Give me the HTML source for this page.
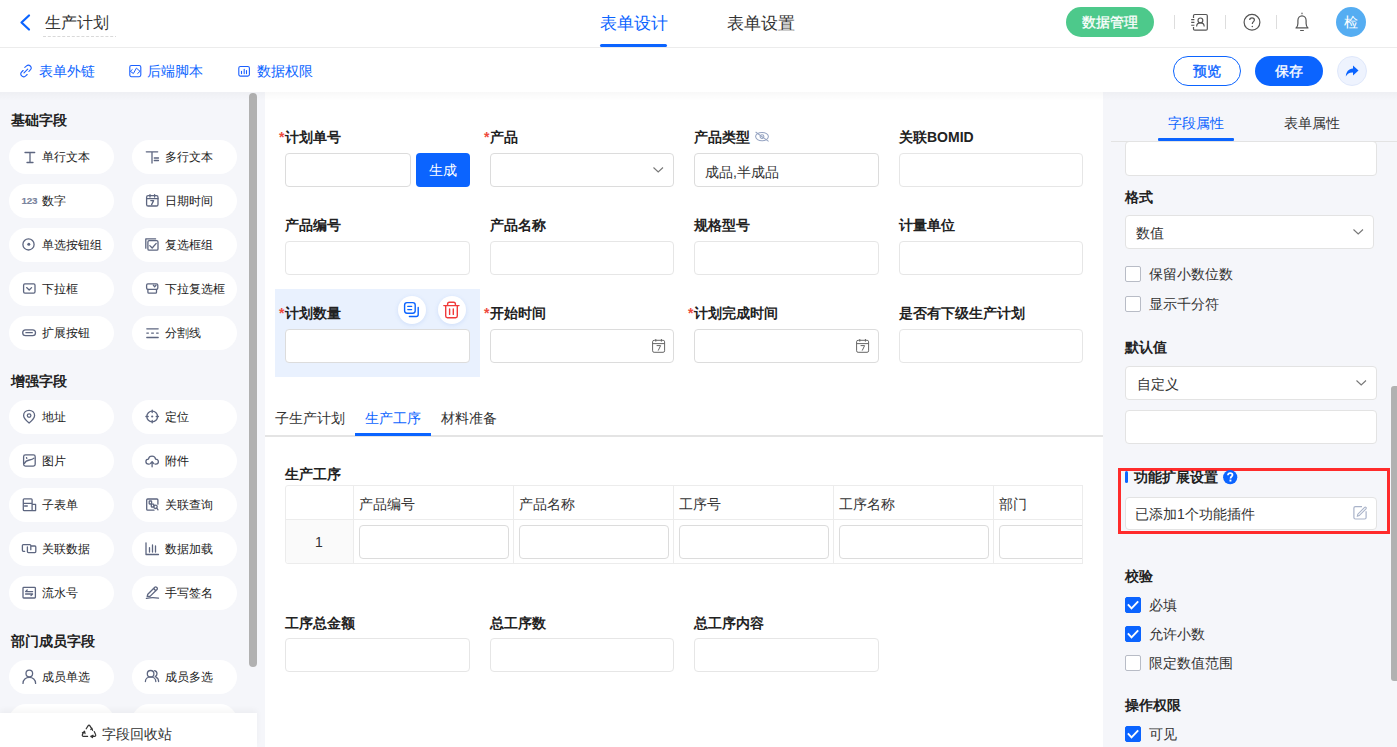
<!DOCTYPE html>
<html><head><meta charset="utf-8">
<style>
*{box-sizing:border-box;margin:0;padding:0}
html,body{width:1397px;height:747px;overflow:hidden}
body{position:relative;font-family:"Liberation Sans",sans-serif;background:#fff;color:#333}
.a{position:absolute;white-space:nowrap}
.t12{font-size:12px;line-height:20px}
.t14{font-size:14px;line-height:20px}
.b{font-weight:bold;color:#222;margin-top:-1px}
.blue{color:#0b64ff}
.inp{position:absolute;background:#fff;border:1px solid #dcdcdc;border-radius:4px}
.req{color:#ee4a3c;font-weight:bold;position:absolute;left:-6px;top:0}
.fb{position:absolute;width:105px;height:34px;border-radius:17px;background:#fff}
.fb svg{position:absolute;left:14px;top:10px}
.fb span{position:absolute;left:33px;top:7px;font-size:12px;line-height:20px;color:#222;white-space:nowrap}
.cb{position:absolute;width:16px;height:16px;border:1px solid #b8bcc6;border-radius:2px;background:#fff}
.cb.on{background:#0b64ff;border-color:#0b64ff}
</style></head><body>

<!-- HEADER -->
<svg class="a" style="left:0;top:0" width="40" height="47"><path d="M29 15.5 L21.5 22.5 L29 29.5" fill="none" stroke="#0b64ff" stroke-width="2.2" stroke-linecap="round" stroke-linejoin="round"/></svg>
<div class="a" style="left:45px;top:13px;font-size:16px;line-height:20px;color:#333">生产计划</div>
<svg class="a" style="left:43px;top:35px" width="73" height="3"><line x1="0" y1="1.5" x2="73" y2="1.5" stroke="#d9d9d9" stroke-width="1" stroke-dasharray="3 1.8"/></svg>
<div class="a blue" style="left:600px;top:13px;font-size:16.5px;line-height:20px">表单设计</div>
<div class="a" style="left:727px;top:13px;font-size:16.5px;line-height:20px;color:#333">表单设置</div>
<div class="a" style="left:600px;top:44px;width:67px;height:3px;background:#0b64ff;border-radius:2px"></div>
<div class="a" style="left:0;top:47px;width:1397px;height:1px;background:#ececec"></div>

<div class="a" style="left:1066px;top:7px;width:88px;height:30px;border-radius:15px;background:#4dc98b;color:#fff;font-size:14px;line-height:30px;text-align:center;-webkit-text-stroke:0.3px #fff">数据管理</div>
<div class="a" style="left:1174px;top:15px;width:1px;height:14px;background:#ddd"></div>
<div class="a" style="left:1225px;top:15px;width:1px;height:14px;background:#ddd"></div>
<div class="a" style="left:1276px;top:15px;width:1px;height:14px;background:#ddd"></div>
<!-- contact icon -->
<svg class="a" style="left:1185px;top:8px" width="30" height="28" viewBox="1185 8 30 28"><path d="M1193.5 18 V15.8 C1193.5 15 1194.1 14.5 1194.8 14.5 H1206 C1206.7 14.5 1207.3 15 1207.3 15.8 V29 C1207.3 29.7 1206.7 30.2 1206 30.2 H1194.8 C1194.1 30.2 1193.5 29.7 1193.5 29 V27" fill="none" stroke="#555" stroke-width="1.2"/><path d="M1191.2 19.6 H1194.4 M1191.2 22.4 H1194.4 M1191.2 25.2 H1194.4" stroke="#555" stroke-width="1.1"/><circle cx="1200.4" cy="20.4" r="2.4" fill="none" stroke="#555" stroke-width="1.2"/><path d="M1196.6 26.6 C1196.6 24.3 1198.3 22.8 1200.4 22.8 C1202.5 22.8 1204.2 24.3 1204.2 26.6" fill="none" stroke="#555" stroke-width="1.2"/></svg>
<!-- help icon -->
<svg class="a" style="left:1238px;top:8px" width="80" height="28" viewBox="1238 8 80 28"><circle cx="1252" cy="22.3" r="7.9" fill="none" stroke="#555" stroke-width="1.2"/><path d="M1249.7 20.1 C1249.7 18.7 1250.7 17.9 1252 17.9 C1253.4 17.9 1254.4 18.8 1254.4 20 C1254.4 21.6 1252.3 21.8 1252.3 24" fill="none" stroke="#555" stroke-width="1.2"/><circle cx="1252.3" cy="26.4" r="0.75" fill="#555"/>
<path d="M1296 27.9 C1297.4 27 1297.9 25.8 1297.9 23.6 V20.6 C1297.9 17.8 1299.7 15.8 1302 15.8 C1304.3 15.8 1306.1 17.8 1306.1 20.6 V23.6 C1306.1 25.8 1306.6 27 1308 27.9 Z" fill="none" stroke="#555" stroke-width="1.2" stroke-linejoin="round"/><path d="M1302 13.2 V13.7 M1300.6 30.5 H1303.4" stroke="#555" stroke-width="1.2" stroke-linecap="round"/></svg>
<div class="a" style="left:1336px;top:7px;width:30px;height:30px;border-radius:15px;background:#55adf2;color:#fff;font-size:14px;line-height:30px;text-align:center">检</div>

<!-- TOOLBAR -->
<svg class="a" style="left:19px;top:64px" width="14" height="14" viewBox="0 0 14 14"><path d="M5.8 3.3 L7.6 1.8 C8.7 0.9 10.3 1 11.3 2 C12.3 3 12.4 4.6 11.5 5.7 L9.9 7.5 M8.2 10.5 L6.4 12.1 C5.3 13 3.7 12.9 2.7 11.9 C1.7 10.9 1.6 9.3 2.5 8.2 L4.1 6.5 M5 8.9 L8.7 5.2" fill="none" stroke="#1a5fff" stroke-width="1.1" stroke-linecap="round"/></svg>
<div class="a t14 blue" style="left:39px;top:61px">表单外链</div>
<svg class="a" style="left:128px;top:64px" width="14" height="14" viewBox="0 0 14 14"><rect x="1.8" y="1.5" width="11" height="11.2" rx="1.6" fill="none" stroke="#1a5fff" stroke-width="1.1"/><path d="M4.5 5.4 L2.3 7.3 L5.4 9.5 L8.4 4.1 L12 7.3 L9.4 9.7" fill="none" stroke="#1a5fff" stroke-width="1" stroke-linejoin="round"/></svg>
<div class="a t14 blue" style="left:147px;top:61px">后端脚本</div>
<svg class="a" style="left:237px;top:64px" width="14" height="14" viewBox="0 0 14 14"><rect x="1.8" y="2.5" width="10.6" height="9.6" rx="1.6" fill="none" stroke="#1a5fff" stroke-width="1.1"/><path d="M4.5 7.2V9.6 M7.2 5.2V9.6 M9.5 6.5V9.6" stroke="#1a5fff" stroke-width="1.1" stroke-linecap="round"/></svg>
<div class="a t14 blue" style="left:257px;top:61px">数据权限</div>

<div class="a" style="left:1173px;top:56px;width:68px;height:30px;border:1px solid #0b64ff;border-radius:15px;color:#0b64ff;font-size:14px;line-height:28px;text-align:center;-webkit-text-stroke:0.35px #0b64ff">预览</div>
<div class="a" style="left:1255px;top:56px;width:68px;height:30px;background:#0b64ff;border-radius:15px;color:#fff;font-size:14px;line-height:30px;text-align:center;-webkit-text-stroke:0.35px #fff">保存</div>
<div class="a" style="left:1337px;top:56px;width:30px;height:30px;background:#eef3fe;border:1px solid #dfe8fb;border-radius:15px"></div>
<svg class="a" style="left:1342px;top:61px" width="20" height="20" viewBox="0 0 20 20"><path d="M11 4.5 L16.5 9.5 L11 14.5 V11.5 C7.5 11.3 5.5 12.5 3.8 15.5 C4.2 10.8 6.5 7.8 11 7.5 Z" fill="#0b64ff"/></svg>

<div class="a" style="left:0;top:92px;width:1397px;height:10px;background:linear-gradient(rgba(0,0,0,0.035),rgba(0,0,0,0))"></div>

<!-- LEFT PANEL -->
<div class="a" style="left:0;top:92px;width:265px;height:655px;background:#f5f6fa;overflow:hidden">
  <div class="a t14 b" style="left:11px;top:19px">基础字段</div>
  <div class="a t14 b" style="left:11px;top:280px">增强字段</div>
  <div class="a t14 b" style="left:11px;top:540px">部门成员字段</div>
  <div class="a" style="left:249px;top:1px;width:8px;height:574px;border-radius:4px;background:#b1b1b1"></div>
</div>
<div id="lp" class="a" style="left:0;top:0;width:265px;height:747px">
<div class="fb" style="left:9px;top:140px"><svg style="left:0;top:0" width="40" height="34"><path d="M16 12.5H25.7M21 12.5V22.5M18 22.5H24" fill="none" stroke="#5d6680" stroke-width="1.3" stroke-linecap="round" stroke-linejoin="round"/></svg><span>单行文本</span></div>
<div class="fb" style="left:132px;top:140px"><svg style="left:0;top:0" width="40" height="34"><path d="M14.3 11.8H25.7M20 11.8V23M22.3 18H26.5M22.3 20.5H26.5" fill="none" stroke="#5d6680" stroke-width="1.3" stroke-linecap="round" stroke-linejoin="round"/></svg><span>多行文本</span></div>
<div class="fb" style="left:9px;top:184px"><svg style="left:0;top:0" width="40" height="34"><text x="12.5" y="19.9" font-family="Liberation Sans" font-weight="bold" font-size="9.8" fill="#7a849d" stroke="#7a849d" stroke-width="0.15" letter-spacing="-0.25">123</text></svg><span>数字</span></div>
<div class="fb" style="left:132px;top:184px"><svg style="left:0;top:0" width="40" height="34"><rect x="14.6" y="11.6" width="11.4" height="10.4" rx="1.6" fill="none" stroke="#5d6680" stroke-width="1.3" stroke-linecap="round" stroke-linejoin="round"/><path d="M14.6 14.6H26M18 10.6V13M22.6 10.6V13M18.8 16.6H21.6L19.6 20.6" fill="none" stroke="#5d6680" stroke-width="1.3" stroke-linecap="round" stroke-linejoin="round" stroke-width="1.1"/></svg><span>日期时间</span></div>
<div class="fb" style="left:9px;top:228px"><svg style="left:0;top:0" width="40" height="34"><circle cx="19.5" cy="16.4" r="5.6" fill="none" stroke="#5d6680" stroke-width="1.3" stroke-linecap="round" stroke-linejoin="round"/><circle cx="19.8" cy="16.3" r="1.5" fill="#5d6680"/></svg><span>单选按钮组</span></div>
<div class="fb" style="left:132px;top:228px"><svg style="left:0;top:0" width="40" height="34"><path d="M13.8 20.2V10.9H23.6" fill="none" stroke="#5d6680" stroke-width="1.3" stroke-linecap="round" stroke-linejoin="round"/><rect x="15.9" y="12.6" width="10.1" height="9.6" rx="1.3" fill="none" stroke="#5d6680" stroke-width="1.3" stroke-linecap="round" stroke-linejoin="round"/><path d="M17.8 17.6L20.2 20L24.2 15.4" fill="none" stroke="#5d6680" stroke-width="1.3" stroke-linecap="round" stroke-linejoin="round"/></svg><span>复选框组</span></div>
<div class="fb" style="left:9px;top:272px"><svg style="left:0;top:0" width="40" height="34"><rect x="14.6" y="11.9" width="11.4" height="9.2" rx="1.3" fill="none" stroke="#5d6680" stroke-width="1.3" stroke-linecap="round" stroke-linejoin="round"/><path d="M17.6 15.6L20.2 18L22.6 15.6" fill="none" stroke="#5d6680" stroke-width="1.3" stroke-linecap="round" stroke-linejoin="round"/></svg><span>下拉框</span></div>
<div class="fb" style="left:132px;top:272px"><svg style="left:0;top:0" width="40" height="34"><rect x="14.6" y="11.9" width="11.2" height="5.4" rx="1.3" fill="none" stroke="#5d6680" stroke-width="1.3" stroke-linecap="round" stroke-linejoin="round"/><path d="M15.9 17.3V20.2C15.9 20.8 16.3 21.2 16.9 21.2H23.5C24.1 21.2 24.5 20.8 24.5 20.2V17.3M21.3 13.2L22.6 14.8L24 13.2" fill="none" stroke="#5d6680" stroke-width="1.3" stroke-linecap="round" stroke-linejoin="round"/></svg><span>下拉复选框</span></div>
<div class="fb" style="left:9px;top:316px"><svg style="left:0;top:0" width="40" height="34"><rect x="13.7" y="13.8" width="12.8" height="5.8" rx="2.9" fill="none" stroke="#5d6680" stroke-width="1.3" stroke-linecap="round" stroke-linejoin="round"/><path d="M16.9 16.7H23.3" fill="none" stroke="#5d6680" stroke-width="1.3" stroke-linecap="round" stroke-linejoin="round"/></svg><span>扩展按钮</span></div>
<div class="fb" style="left:132px;top:316px"><svg style="left:0;top:0" width="40" height="34"><path d="M14.8 12.8H26.2M14.8 21.5H26.2M14.8 17.1H16.4M19.6 17.1H21.4M24.6 17.1H26.2" fill="none" stroke="#5d6680" stroke-width="1.3" stroke-linecap="round" stroke-linejoin="round"/></svg><span>分割线</span></div>
<div class="fb" style="left:9px;top:400px"><svg style="left:0;top:0" width="40" height="34"><path d="M20.1 23C20.1 23 14.6 18.6 14.6 15.6C14.6 12.5 17.1 10.4 20.1 10.4C23.1 10.4 25.6 12.5 25.6 15.6C25.6 18.6 20.1 23 20.1 23Z" fill="none" stroke="#5d6680" stroke-width="1.3" stroke-linecap="round" stroke-linejoin="round"/><circle cx="20.1" cy="15.6" r="1.8" fill="none" stroke="#5d6680" stroke-width="1.3" stroke-linecap="round" stroke-linejoin="round"/></svg><span>地址</span></div>
<div class="fb" style="left:132px;top:400px"><svg style="left:0;top:0" width="40" height="34"><circle cx="20.2" cy="16.5" r="5.4" fill="none" stroke="#5d6680" stroke-width="1.3" stroke-linecap="round" stroke-linejoin="round"/><path d="M20.2 10.2V12.5M20.2 20.5V22.8M13.9 16.5H16.2M24.2 16.5H26.5" fill="none" stroke="#5d6680" stroke-width="1.3" stroke-linecap="round" stroke-linejoin="round"/><circle cx="20.2" cy="16.5" r="1.1" fill="#5d6680"/></svg><span>定位</span></div>
<div class="fb" style="left:9px;top:444px"><svg style="left:0;top:0" width="40" height="34"><rect x="14.6" y="10.9" width="11.6" height="11.2" rx="1.8" fill="none" stroke="#5d6680" stroke-width="1.3" stroke-linecap="round" stroke-linejoin="round"/><path d="M15.4 19.5C16.4 17 18 16.3 20.5 16C22.8 15.8 24 15.4 25 14.2M17.5 13.6L17.8 14.4" fill="none" stroke="#5d6680" stroke-width="1.3" stroke-linecap="round" stroke-linejoin="round"/></svg><span>图片</span></div>
<div class="fb" style="left:132px;top:444px"><svg style="left:0;top:0" width="40" height="34"><path d="M17.2 20.2H16.6C14.9 20.2 13.9 19 13.9 17.6C13.9 16.2 14.9 15.1 16.4 15.1C16.8 13.3 18.2 12.2 20 12.2C21.9 12.2 23.3 13.5 23.6 15.2C25.2 15.3 26.4 16.3 26.4 17.8C26.4 19.2 25.3 20.2 23.9 20.2H23.2M20.1 22.8V17.8M18.3 19.6L20.1 17.6L21.9 19.6" fill="none" stroke="#5d6680" stroke-width="1.3" stroke-linecap="round" stroke-linejoin="round"/></svg><span>附件</span></div>
<div class="fb" style="left:9px;top:488px"><svg style="left:0;top:0" width="40" height="34"><path d="M23.1 16.4V11.7C23.1 11.1 22.7 10.8 22.2 10.8H15.2C14.7 10.8 14.3 11.1 14.3 11.7V21.7C14.3 22.2 14.7 22.6 15.2 22.6H26.6V16.4H23.1V22.6M14.3 15.4H23.1M15.6 18H18.3" fill="none" stroke="#5d6680" stroke-width="1.3" stroke-linecap="round" stroke-linejoin="round"/></svg><span>子表单</span></div>
<div class="fb" style="left:132px;top:488px"><svg style="left:0;top:0" width="40" height="34"><path d="M22 22.2H15.7C15.1 22.2 14.7 21.8 14.7 21.2V12C14.7 11.4 15.1 11 15.7 11H24.9C25.5 11 25.9 11.4 25.9 12V16.2" fill="none" stroke="#5d6680" stroke-width="1.3" stroke-linecap="round" stroke-linejoin="round"/><rect x="17.2" y="13" width="2.4" height="3" rx="0.5" fill="none" stroke="#5d6680" stroke-width="1.3" stroke-linecap="round" stroke-linejoin="round" stroke-width="1.1"/><rect x="19.3" y="16.2" width="2.5" height="2.8" rx="0.5" fill="none" stroke="#5d6680" stroke-width="1.3" stroke-linecap="round" stroke-linejoin="round" stroke-width="1.1"/><circle cx="23.5" cy="18.8" r="1.7" fill="none" stroke="#5d6680" stroke-width="1.3" stroke-linecap="round" stroke-linejoin="round" stroke-width="1.1"/><path d="M24.8 20.2L26 21.8" fill="none" stroke="#5d6680" stroke-width="1.3" stroke-linecap="round" stroke-linejoin="round"/></svg><span>关联查询</span></div>
<div class="fb" style="left:9px;top:532px"><svg style="left:0;top:0" width="40" height="34"><path d="M15.7 19.3H14.4C13.8 19.3 13.4 18.9 13.4 18.3V13.6C13.4 13 13.8 12.6 14.4 12.6H20.8C21.4 12.6 21.8 13 21.8 13.6V17.7M18.4 15V19.6C18.4 20.2 18.8 20.6 19.4 20.6H25.8C26.4 20.6 26.8 20.2 26.8 19.6V15C26.8 14.4 26.4 14 25.8 14H22" fill="none" stroke="#5d6680" stroke-width="1.3" stroke-linecap="round" stroke-linejoin="round"/></svg><span>关联数据</span></div>
<div class="fb" style="left:132px;top:532px"><svg style="left:0;top:0" width="40" height="34"><path d="M14 10.8V22.5H26.5M17.5 15.6V20M20.5 13V20M23.5 14V20" fill="none" stroke="#5d6680" stroke-width="1.3" stroke-linecap="round" stroke-linejoin="round"/></svg><span>数据加载</span></div>
<div class="fb" style="left:9px;top:576px"><svg style="left:0;top:0" width="40" height="34"><rect x="14" y="11.4" width="12.4" height="10.6" rx="0.8" fill="none" stroke="#5d6680" stroke-width="1.3" stroke-linecap="round" stroke-linejoin="round"/><path d="M16.6 15.6H23.6M16.6 18H23.6M16.8 15.4L18.2 14M23.4 18.2L22 19.6" fill="none" stroke="#5d6680" stroke-width="1.3" stroke-linecap="round" stroke-linejoin="round"/></svg><span>流水号</span></div>
<div class="fb" style="left:132px;top:576px"><svg style="left:0;top:0" width="40" height="34"><path d="M15.2 20.4L15.8 18.2L22.8 11.3C23.3 10.8 24 10.8 24.5 11.3L25 11.8C25.5 12.3 25.5 13 25 13.5L18 20.4Z M21.6 12.5L23.8 14.7" fill="none" stroke="#5d6680" stroke-width="1.3" stroke-linecap="round" stroke-linejoin="round"/><path d="M14.4 22.3C18 21.6 22 21.5 26.5 22.1" fill="none" stroke="#5d6680" stroke-width="1.3" stroke-linecap="round" stroke-linejoin="round"/></svg><span>手写签名</span></div>
<div class="fb" style="left:9px;top:660px"><svg style="left:0;top:0" width="40" height="34"><circle cx="20.3" cy="13.5" r="3.3" fill="none" stroke="#5d6680" stroke-width="1.3" stroke-linecap="round" stroke-linejoin="round"/><path d="M14 23.4C14 19.8 16.8 17.4 20.3 17.4C23.8 17.4 26.6 19.8 26.6 23.4" fill="none" stroke="#5d6680" stroke-width="1.3" stroke-linecap="round" stroke-linejoin="round"/></svg><span>成员单选</span></div>
<div class="fb" style="left:132px;top:660px"><svg style="left:0;top:0" width="40" height="34"><circle cx="18.6" cy="13.8" r="3.3" fill="none" stroke="#5d6680" stroke-width="1.3" stroke-linecap="round" stroke-linejoin="round"/><path d="M13.4 21.6C13.4 18.8 15.6 16.8 18.6 16.8C21.6 16.8 23.8 18.8 23.8 21.6M22.6 10.6C24 11 25 12.2 25 13.7C25 15 24.3 16 23.2 16.6M24.2 17.3C25.8 18 26.6 19.6 26.6 21.6" fill="none" stroke="#5d6680" stroke-width="1.3" stroke-linecap="round" stroke-linejoin="round"/></svg><span>成员多选</span></div>
<div class="fb" style="left:9px;top:704px"><svg style="left:0;top:0" width="40" height="34"></svg><span>成员部门</span></div>
<div class="fb" style="left:132px;top:704px"><svg style="left:0;top:0" width="40" height="34"></svg><span>部门多选</span></div></div>
<div class="a" style="left:0;top:713px;width:257px;height:34px;background:#fff;box-shadow:0 -3px 6px rgba(0,0,0,0.04)"></div>
<svg class="a" style="left:78px;top:722px" width="22" height="22" viewBox="0 0 22 22"><path d="M8.2 6.8L10.2 3.6C10.6 3 11.4 3 11.8 3.6L13.5 6.4M12.8 7.6L13.9 6.2L14.6 8.4M16.2 9.6L17.6 12.6C18 13.4 17.5 14.4 16.6 14.4H13.2M15 13.2L12.8 14.4L14.6 15.6M9.6 14.4H5.4C4.5 14.4 4 13.4 4.4 12.6L6.2 9.2M4.4 10.8L6.6 9.4L7 11.6" fill="none" stroke="#333" stroke-width="1.2" stroke-linecap="round" stroke-linejoin="round"/></svg>
<div class="a t14" style="left:102px;top:724px;color:#333">字段回收站</div>

<!-- CENTER -->
<div class="a" style="left:265px;top:92px;width:838px;height:655px;background:#fff"></div>
<!-- selected block -->
<div class="a" style="left:275px;top:289px;width:205px;height:88px;background:#e9f1fe"></div>

<!-- row 1 -->
<div class="a t14 b" style="left:285px;top:128px"><span class="req">*</span>计划单号</div>
<div class="inp" style="left:285px;top:153px;width:126px;height:34px"></div>
<div class="a" style="left:416px;top:153px;width:54px;height:34px;background:#0b64ff;border-radius:4px;color:#fff;font-size:14px;line-height:34px;text-align:center">生成</div>
<div class="a t14 b" style="left:490px;top:128px"><span class="req">*</span>产品</div>
<div class="inp" style="left:490px;top:153px;width:184px;height:34px"></div>
<svg class="a" style="left:650px;top:163px" width="16" height="14"><path d="M3.5 4.5L8.2 9L13 4.5" fill="none" stroke="#777" stroke-width="1.1"/></svg>
<div class="a t14 b" style="left:694px;top:128px">产品类型</div>
<svg class="a" style="left:752px;top:129px" width="20" height="16" viewBox="0 0 20 16"><ellipse cx="10" cy="7.6" rx="6.4" ry="4.2" fill="none" stroke="#96a4c2" stroke-width="1.05"/><circle cx="10" cy="7.6" r="1.9" fill="none" stroke="#96a4c2" stroke-width="1.05"/><path d="M3.6 3L16.6 12.4" stroke="#96a4c2" stroke-width="1.05"/></svg>
<div class="inp" style="left:694px;top:153px;width:185px;height:34px"></div>
<div class="a t14" style="left:705px;top:162px;color:#333">成品,半成品</div>
<div class="a t14 b" style="left:899px;top:128px">关联BOMID</div>
<div class="inp" style="left:899px;top:153px;width:184px;height:34px;border-color:#e6e6e6"></div>

<!-- row 2 -->
<div class="a t14 b" style="left:285px;top:216px">产品编号</div>
<div class="inp" style="left:285px;top:241px;width:185px;height:34px;border-color:#e6e6e6"></div>
<div class="a t14 b" style="left:490px;top:216px">产品名称</div>
<div class="inp" style="left:490px;top:241px;width:184px;height:34px;border-color:#e6e6e6"></div>
<div class="a t14 b" style="left:694px;top:216px">规格型号</div>
<div class="inp" style="left:694px;top:241px;width:185px;height:34px;border-color:#e6e6e6"></div>
<div class="a t14 b" style="left:899px;top:216px">计量单位</div>
<div class="inp" style="left:899px;top:241px;width:184px;height:34px;border-color:#e6e6e6"></div>

<!-- row 3 -->
<div class="a t14 b" style="left:285px;top:304px"><span class="req">*</span>计划数量</div>
<div class="a" style="left:398px;top:296px;width:28px;height:28px;border-radius:14px;background:#fff;box-shadow:0 1px 4px rgba(60,120,230,0.15)"></div>
<svg class="a" style="left:398px;top:296px" width="28" height="28" viewBox="398 296 28 28"><rect x="404.6" y="302.6" width="10.6" height="10.6" rx="2.4" fill="none" stroke="#0b64ff" stroke-width="1.4"/><path d="M407.8 306.4H411.6M407.8 309.6H411.6" stroke="#0b64ff" stroke-width="1.4" stroke-linecap="round"/><path d="M418.2 307.4V314.6C418.2 315.7 417.4 316.5 416.3 316.5H409.4" fill="none" stroke="#0b64ff" stroke-width="1.4" stroke-linecap="round"/></svg>
<div class="a" style="left:438px;top:296px;width:28px;height:28px;border-radius:14px;background:#fff;box-shadow:0 1px 4px rgba(60,120,230,0.15)"></div>
<svg class="a" style="left:438px;top:296px" width="28" height="28" viewBox="438 296 28 28"><path d="M443.8 305.6H459M447.6 305.6V304C447.6 302.9 448.3 302.2 449.4 302.2H453.6C454.7 302.2 455.4 302.9 455.4 304V305.6M445.7 305.8V316C445.7 317 446.4 317.7 447.4 317.7H455.6C456.6 317.7 457.3 317 457.3 316V305.8M449.6 309V314.4M453.3 309V314.4" fill="none" stroke="#f03a3a" stroke-width="1.4" stroke-linecap="round"/></svg>
<div class="inp" style="left:285px;top:329px;width:185px;height:34px"></div>
<div class="a t14 b" style="left:490px;top:304px"><span class="req">*</span>开始时间</div>
<div class="inp" style="left:490px;top:329px;width:184px;height:34px"></div>
<svg class="a" style="left:650px;top:337px" width="18" height="18" viewBox="650 337 18 18"><rect x="652.6" y="340.3" width="12" height="12" rx="1.5" fill="none" stroke="#666" stroke-width="1"/><path d="M652.6 343.6H664.6M655.8 339V341.6M661.4 339V341.6M656.6 345.6H660.6L658.2 350.6" fill="none" stroke="#666" stroke-width="1"/></svg>
<div class="a t14 b" style="left:694px;top:304px"><span class="req">*</span>计划完成时间</div>
<div class="inp" style="left:694px;top:329px;width:185px;height:34px"></div>
<svg class="a" style="left:854px;top:337px" width="18" height="18" viewBox="650 337 18 18"><rect x="652.6" y="340.3" width="12" height="12" rx="1.5" fill="none" stroke="#666" stroke-width="1"/><path d="M652.6 343.6H664.6M655.8 339V341.6M661.4 339V341.6M656.6 345.6H660.6L658.2 350.6" fill="none" stroke="#666" stroke-width="1"/></svg>
<div class="a t14 b" style="left:899px;top:304px">是否有下级生产计划</div>
<div class="inp" style="left:899px;top:329px;width:184px;height:34px;border-color:#e6e6e6"></div>

<!-- tabs -->
<div class="a t14" style="left:275px;top:408px;color:#333">子生产计划</div>
<div class="a t14 blue" style="left:365px;top:408px">生产工序</div>
<div class="a t14" style="left:441px;top:408px;color:#333">材料准备</div>
<div class="a" style="left:265px;top:435px;width:838px;height:2px;background:#e4e4e4"></div>
<div class="a" style="left:355px;top:433px;width:76px;height:3px;background:#0b64ff"></div>

<!-- table -->
<div class="a t14 b" style="left:285px;top:465px">生产工序</div>
<div class="a" style="left:285px;top:485px;width:798px;height:80px;overflow:hidden">
  <div class="a" style="left:0;top:0;width:900px;height:79px;border:1px solid #ececec;border-radius:3px"></div>
  <div class="a" style="left:1px;top:35px;width:67px;height:43px;background:#fafafa;border-radius:0 0 0 3px"></div>
  <div class="a" style="left:0;top:34px;width:900px;height:1px;background:#ececec"></div>
  <div class="a" style="left:68px;top:0;width:1px;height:79px;background:#ececec"></div>
  <div class="a" style="left:228px;top:0;width:1px;height:79px;background:#ececec"></div>
  <div class="a" style="left:388px;top:0;width:1px;height:79px;background:#ececec"></div>
  <div class="a" style="left:548px;top:0;width:1px;height:79px;background:#ececec"></div>
  <div class="a" style="left:708px;top:0;width:1px;height:79px;background:#ececec"></div>
  <div class="a t14" style="left:74px;top:9px;color:#333">产品编号</div>
  <div class="a t14" style="left:234px;top:9px;color:#333">产品名称</div>
  <div class="a t14" style="left:394px;top:9px;color:#333">工序号</div>
  <div class="a t14" style="left:554px;top:9px;color:#333">工序名称</div>
  <div class="a t14" style="left:714px;top:9px;color:#333">部门</div>
  <div class="a t14" style="left:0;top:47px;width:68px;text-align:center;color:#333">1</div>
  <div class="inp" style="left:74px;top:40px;width:150px;height:34px"></div>
  <div class="inp" style="left:234px;top:40px;width:150px;height:34px"></div>
  <div class="inp" style="left:394px;top:40px;width:150px;height:34px"></div>
  <div class="inp" style="left:554px;top:40px;width:150px;height:34px"></div>
  <div class="inp" style="left:714px;top:40px;width:150px;height:34px"></div>
  <div class="a" style="left:797px;top:0;width:1px;height:79px;background:#ececec"></div>
</div>

<!-- bottom fields -->
<div class="a t14 b" style="left:285px;top:614px">工序总金额</div>
<div class="inp" style="left:285px;top:638px;width:185px;height:34px;border-color:#e6e6e6"></div>
<div class="a t14 b" style="left:490px;top:614px">总工序数</div>
<div class="inp" style="left:490px;top:638px;width:184px;height:34px;border-color:#e6e6e6"></div>
<div class="a t14 b" style="left:694px;top:614px">总工序内容</div>
<div class="inp" style="left:694px;top:638px;width:185px;height:34px;border-color:#e6e6e6"></div>

<!-- RIGHT PANEL -->
<div class="a" style="left:1103px;top:92px;width:294px;height:655px;background:#f5f6fa"></div>
<div class="a t14 blue" style="left:1168px;top:113px">字段属性</div>
<div class="a t14" style="left:1284px;top:113px;color:#333">表单属性</div>
<div class="a" style="left:1111px;top:141px;width:286px;height:1px;background:#e3e3e3"></div>
<div class="a" style="left:1158px;top:138px;width:76px;height:3px;background:#0b64ff;border-radius:1px"></div>
<div class="a" style="left:1103px;top:142px;width:294px;height:605px;overflow:hidden">
  <div class="inp" style="left:22px;top:-1px;width:252px;height:35px;border-color:#e3e3e3"></div>
</div>
<div class="a t14 b" style="left:1125px;top:188px">格式</div>
<div class="inp" style="left:1125px;top:215px;width:249px;height:34px;border-color:#e3e3e3"></div>
<div class="a t14" style="left:1136px;top:223px;color:#333">数值</div>
<svg class="a" style="left:1350px;top:225px" width="16" height="14"><path d="M3.5 4.5L8.2 9L13 4.5" fill="none" stroke="#777" stroke-width="1.1"/></svg>
<div class="cb" style="left:1125px;top:266px"></div>
<div class="a t14" style="left:1149px;top:264px;color:#333">保留小数位数</div>
<div class="cb" style="left:1125px;top:296px"></div>
<div class="a t14" style="left:1149px;top:294px;color:#333">显示千分符</div>

<div class="a t14 b" style="left:1125px;top:338px">默认值</div>
<div class="inp" style="left:1125px;top:366px;width:252px;height:34px;border-color:#e3e3e3"></div>
<div class="a t14" style="left:1137px;top:374px;color:#333">自定义</div>
<svg class="a" style="left:1353px;top:376px" width="16" height="14"><path d="M3.5 4.5L8.2 9L13 4.5" fill="none" stroke="#777" stroke-width="1.1"/></svg>
<div class="inp" style="left:1125px;top:410px;width:252px;height:34px;border-color:#e3e3e3"></div>

<div class="a" style="left:1118px;top:468px;width:272px;height:66px;border:3px solid #ff2b2b"></div>
<div class="a" style="left:1125px;top:471px;width:3px;height:12px;background:#0b64ff;border-radius:1.5px"></div>
<div class="a t14 b" style="left:1134px;top:468px">功能扩展设置</div>
<svg class="a" style="left:1222px;top:469px" width="16" height="16" viewBox="0 0 16 16"><circle cx="8.2" cy="8.2" r="7.1" fill="#0b64ff"/><path d="M5.9 6.3C5.9 5 6.9 4.2 8.2 4.2C9.5 4.2 10.5 5 10.5 6.1C10.5 7.5 8.5 7.6 8.5 9.4" fill="none" stroke="#fff" stroke-width="1.7"/><rect x="7.5" y="10.6" width="1.9" height="1.9" fill="#fff"/></svg>
<div class="inp" style="left:1125px;top:497px;width:252px;height:33px;border-color:#e3e3e3"></div>
<div class="a t14" style="left:1135px;top:504px;color:#333">已添加1个功能插件</div>
<svg class="a" style="left:1350px;top:503px" width="20" height="20" viewBox="1350 503 20 20"><path d="M1362 506.6H1355.4C1354.5 506.6 1353.9 507.2 1353.9 508.1V517.5C1353.9 518.4 1354.5 519 1355.4 519H1364.6C1365.5 519 1366.1 518.4 1366.1 517.5V511.2" fill="none" stroke="#a9b3c9" stroke-width="1.2"/><path d="M1357.4 516.2L1357.8 514.2L1364.6 507.4C1365 507 1365.6 507 1366 507.4C1366.4 507.8 1366.4 508.4 1366 508.8L1359.2 515.6Z" fill="none" stroke="#a9b3c9" stroke-width="1.1"/></svg>

<div class="a t14 b" style="left:1125px;top:567px">校验</div>
<div class="cb on" style="left:1125px;top:597px"><svg width="16" height="16" style="position:absolute;left:-1px;top:-1px"><path d="M2.9 7.4L6.5 11.4L13.2 4.3" fill="none" stroke="#fff" stroke-width="1.9"/></svg></div>
<div class="a t14" style="left:1149px;top:595px;color:#333">必填</div>
<div class="cb on" style="left:1125px;top:626px"><svg width="16" height="16" style="position:absolute;left:-1px;top:-1px"><path d="M2.9 7.4L6.5 11.4L13.2 4.3" fill="none" stroke="#fff" stroke-width="1.9"/></svg></div>
<div class="a t14" style="left:1149px;top:624px;color:#333">允许小数</div>
<div class="cb" style="left:1125px;top:655px"></div>
<div class="a t14" style="left:1149px;top:653px;color:#333">限定数值范围</div>
<div class="a t14 b" style="left:1125px;top:696px">操作权限</div>
<div class="cb on" style="left:1125px;top:726px"><svg width="16" height="16" style="position:absolute;left:-1px;top:-1px"><path d="M2.9 7.4L6.5 11.4L13.2 4.3" fill="none" stroke="#fff" stroke-width="1.9"/></svg></div>
<div class="a t14" style="left:1149px;top:724px;color:#333">可见</div>
<div class="a" style="left:1391px;top:386px;width:6px;height:295px;border-radius:3px 0 0 3px;background:#b1b1b1"></div>

<div class="a" style="left:0;top:92px;width:1397px;height:9px;background:linear-gradient(rgba(0,0,0,0.028),rgba(0,0,0,0))"></div>
</body></html>
